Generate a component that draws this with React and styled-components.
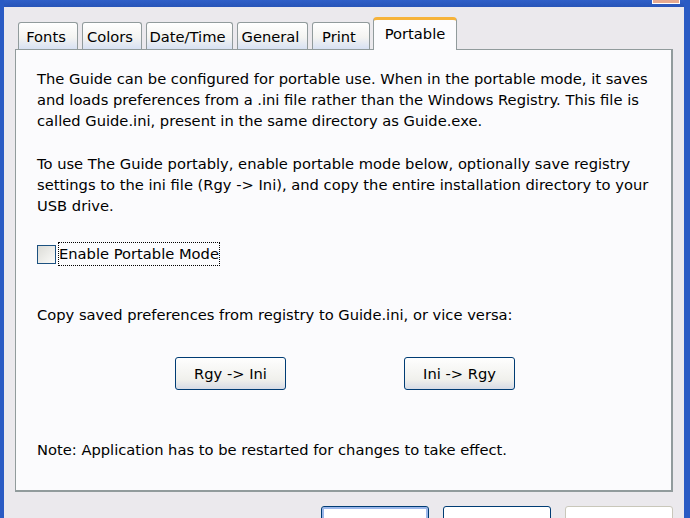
import React from "react";
import styled, { createGlobalStyle, css } from "styled-components";

const GlobalStyle = createGlobalStyle`
  html, body {
    margin: 0;
    padding: 0;
    background: #ece9ec;
  }
`;

const Window = styled.div`
  width: 690px;
  height: 518px;
  box-sizing: border-box;
  overflow: hidden;
  display: flex;
  flex-direction: column;
  background: #ebe9ed;
  border-left: 4px solid #2a5bc4;
  border-right: 6px solid #2a5bc4;
  font-family: "DejaVu Sans", sans-serif;
  font-size: 14.7px;
  color: #000;
`;

const TitleEdge = styled.div`
  height: 7px;
  flex: none;
  margin: 0 -6px 0 -4px;
  background: linear-gradient(#2f5fc8, #2754b8);
  position: relative;
`;

const CloseStub = styled.div`
  position: absolute;
  right: 10px;
  top: 0;
  width: 26px;
  height: 3px;
  background: #e7a98f;
  border: 1px solid #fff;
  border-top: none;
`;

const Body = styled.div`
  flex: 1;
  display: flex;
  flex-direction: column;
  padding: 10px 11px 0 11px;
`;

const TabStrip = styled.div`
  display: flex;
  align-items: flex-end;
  gap: 4px;
  padding-left: 3px;
  height: 32px;
  position: relative;
  z-index: 1;
`;

const Tab = styled.div`
  width: ${(p) => p.$w}px;
  height: 27px;
  box-sizing: border-box;
  display: flex;
  align-items: center;
  justify-content: center;
  padding-right: 4px;
  border: 1px solid #919b9c;
  border-bottom: none;
  border-radius: 3px 3px 0 0;
  background: linear-gradient(#ffffff, #f4f4f1 55%, #d7e1f3);
  white-space: nowrap;

  ${(p) =>
    p.$active &&
    css`
      height: 33px;
      margin-left: -1px;
      padding: 0 0 3px;
      margin-bottom: -1px;
      background: #fcfcfe;
      border-top: 3px solid #f6b33a;
      border-radius: 4px 4px 0 0;
    `}
`;

const Panel = styled.div`
  height: 443px;
  box-sizing: border-box;
  border: 1px solid #919b9c;
  border-right-width: 2px;
  border-bottom-width: 2px;
  background: #fbfbfd;
  padding: 18px 21px 0;
  display: flex;
  flex-direction: column;
`;

const Para = styled.p`
  margin: 0;
  line-height: 21px;
  white-space: nowrap;
  margin-top: ${(p) => p.$top || 0}px;
`;

const CheckRow = styled.label`
  display: flex;
  align-items: center;
  gap: 3px;
  margin-top: 27px;
  height: 22px;
`;

const Box = styled.span`
  width: 17px;
  height: 17px;
  border: 1px solid #1c5180;
  background: linear-gradient(135deg, #dcdcd7, #fbfbf9);
`;

const FocusLabel = styled.span`
  outline: 1px dotted #000;
  padding: 1px 0;
  line-height: 20px;
`;

const ButtonRow = styled.div`
  display: flex;
  gap: 118px;
  padding-left: 138px;
  margin-top: 32px;
`;

const Button = styled.button`
  width: 111px;
  height: 33px;
  font: inherit;
  color: #000;
  border: 1px solid #003c74;
  border-radius: 3px;
  background: linear-gradient(#fefefe, #f0f0ec 70%, #d6dbe6);
  padding: 0;
`;

const Footer = styled.div`
  display: flex;
  justify-content: flex-end;
  gap: 14px;
  margin-top: 14px;
`;

const DialogButton = styled.div`
  width: 108px;
  height: 30px;
  box-sizing: border-box;
  border: 1px solid #003c74;
  border-radius: 3px;
  background: #fff;
  ${(p) =>
    p.$default &&
    css`
      box-shadow: inset 0 0 0 2px #9bb7ea;
    `}
  ${(p) =>
    p.$disabled &&
    css`
      border-color: #c9c7ba;
    `}
`;

const tabs = [
  ["Fonts", 60],
  ["Colors", 60],
  ["Date/Time", 87],
  ["General", 71],
  ["Print", 58],
  ["Portable", 84],
];

export default function App() {
  return (
    <>
      <GlobalStyle />
      <Window>
        <TitleEdge>
          <CloseStub />
        </TitleEdge>
        <Body>
          <TabStrip>
            {tabs.map(([t, w]) => (
              <Tab key={t} $w={w} $active={t === "Portable"}>
                {t}
              </Tab>
            ))}
          </TabStrip>
          <Panel>
            <Para>
              The Guide can be configured for portable use. When in the portable mode, it saves
              <br />
              and loads preferences from a .ini file rather than the Windows Registry. This file is
              <br />
              called Guide.ini, present in the same directory as Guide.exe.
            </Para>
            <Para $top={22}>
              To use The Guide portably, enable portable mode below, optionally save registry
              <br />
              settings to the ini file (Rgy -&gt; Ini), and copy the entire installation directory to your
              <br />
              USB drive.
            </Para>
            <CheckRow>
              <Box />
              <FocusLabel>Enable Portable Mode</FocusLabel>
            </CheckRow>
            <Para $top={39}>
              Copy saved preferences from registry to Guide.ini, or vice versa:
            </Para>
            <ButtonRow>
              <Button>Rgy -&gt; Ini</Button>
              <Button>Ini -&gt; Rgy</Button>
            </ButtonRow>
            <Para $top={49}>
              Note: Application has to be restarted for changes to take effect.
            </Para>
          </Panel>
          <Footer>
            <DialogButton $default />
            <DialogButton />
            <DialogButton $disabled />
          </Footer>
        </Body>
      </Window>
    </>
  );
}
